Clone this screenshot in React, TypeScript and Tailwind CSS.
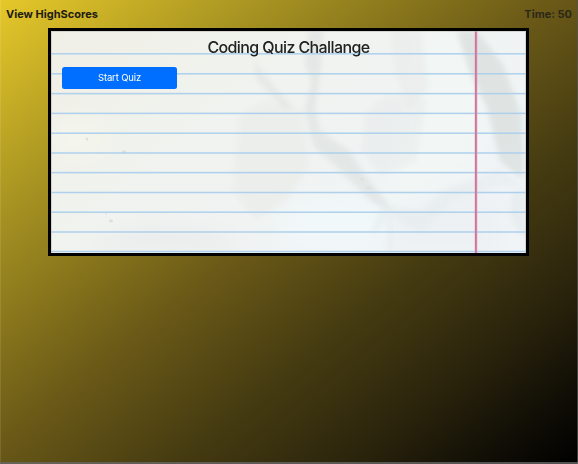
const ruleYs = [22.8, 42.8, 62.6, 82.4, 102.2, 122, 141.6, 161.5, 181.2, 201, 220.5];

/** Creased notebook sheet: soft folds, blue rules and a pink margin. */
function Paper() {
  return (
    <svg className="absolute inset-0 h-full w-full" viewBox="0 0 475 222" preserveAspectRatio="none" aria-hidden="true">
      <defs>
        <linearGradient id="sheet" x1="0" y1="0" x2="1" y2="0.55">
          <stop offset="0" stopColor="#f0efe6" />
          <stop offset="0.45" stopColor="#f0f3ef" />
          <stop offset="1" stopColor="#f0f4f7" />
        </linearGradient>
        <filter id="soft" x="-20%" y="-20%" width="140%" height="140%">
          <feGaussianBlur stdDeviation="2.6" />
        </filter>
        <filter id="wide" x="-40%" y="-40%" width="180%" height="180%">
          <feGaussianBlur stdDeviation="10" />
        </filter>
      </defs>
      <rect width="475" height="222" fill="url(#sheet)" />
      <g filter="url(#wide)">
        <ellipse cx="28" cy="107" rx="28" ry="20" fill="#f4f5ec" />
        <ellipse cx="290" cy="193" rx="62" ry="28" fill="#f1f8f9" />
        <path d="M370 0h48l16 75-15 65-75 35-5-50z" fill="#f2f7f5" />
        <path d="M50 210l42-16 70 5 35 23H30z" fill="#ebeded" />
        <path d="M340 180l75-25 35 15v52H333z" fill="#edf1f4" />
      </g>
      <g filter="url(#soft)">
        <path d="M188 88q22-30 64-8l7 56-24 34-30 19-24-30z" fill="#e6e9e4" opacity=".45" />
        <path d="M315 82q27-31 60-12l-10 60-35 14-19-26z" fill="#e3e7e5" opacity=".4" />
        <path d="M340 0h30l8 58-20 20-14-38z" fill="#e8eae7" opacity=".55" />
        <path d="M203 30l22 28 17 18-8 2-28-29z" fill="#e0e3e0" opacity=".6" />
        <path d="M258 0h14l-2 35-6 42 5 23 29 19 16 25 29 36-21-8-31-31-29-26-8-38 7-26-7-18z" fill="#dfe3e1" opacity=".75" />
        <path d="M406 0h20l26 34 18 48 3 44-2 22-22-18-13-53-18-38z" fill="#dde2e1" opacity=".9" />
        <path d="M330 173l40 9 23-23 31-10 23-11 26 18-24-2-49 16-28 32-33-18-20 23z" fill="#e2e8e9" opacity=".45" />
        <path d="M463 160q-12 30 12 48v-48z" fill="#e4eaeb" opacity=".7" />
        <path d="M339 184v38" stroke="#dee5e8" strokeWidth="3" opacity=".5" />
      </g>
      <g fill="#dbdfdd">
        <ellipse cx="73" cy="121" rx="2" ry="1.4" />
        <ellipse cx="36" cy="108" rx="1.2" ry="1.5" />
        <ellipse cx="60" cy="190" rx="2" ry="1.4" />
        <ellipse cx="55" cy="183" rx="1" ry=".8" />
        <ellipse cx="318" cy="157" rx="3" ry="1.4" opacity=".7" />
        <ellipse cx="311" cy="148" rx="2" ry="1.5" opacity=".7" />
      </g>
      {ruleYs.map((y) => (
        <rect key={y} x="0" y={y - 0.75} width="475" height="1.5" fill="#aed0ed" />
      ))}
      <rect x="423.8" y="0" width="2.4" height="222" fill="#d789a9" />
      <rect x="424.4" y="0" width="0.8" height="222" fill="#c56c94" />
      <path d="M.5 222V.5H474.5V222" fill="none" stroke="#b9bbb4" opacity=".55" />
    </svg>
  );
}

export default function App() {
  return (
    <div className="relative flex h-[464px] w-[578px] flex-col overflow-hidden bg-[linear-gradient(to_bottom_right,#e6c82a_0%,#a99522_22%,#6a5917_48%,#453b11_65%,#2b240c_80%,#0f0d05_92%,#000_100%)] font-['Inter','Liberation_Sans',sans-serif] text-[#212529]">
      <header className="flex h-[28px] shrink-0 items-start justify-between px-[6px] pt-[6px] text-[11px] leading-[16px] font-bold">
        <a className="text-[#1d1b12]">View HighScores</a>
        <span className="text-[#2b2819]">Time: 50</span>
      </header>
      <main className="relative ml-[48px] h-[228px] w-[481px] border-[3px] border-black">
        <Paper />
        <div className="relative flex flex-col items-start pl-[11px]">
          <h1 className="mt-[4px] h-[24px] w-[453px] text-center text-[16px] leading-[24px] font-medium tracking-[-0.6px] text-[#212322]">Coding Quiz Challange</h1>
          <button className="mt-[8px] h-[22px] w-[115px] rounded-[2.5px] bg-[#006fff] text-center text-[9.5px] leading-[22px] tracking-[-0.15px] text-white">Start Quiz</button>
        </div>
      </main>
      <div className="absolute inset-y-0 left-0 w-px bg-white/10" />
      <div className="absolute inset-y-0 right-0 w-px bg-[#555]/70" />
      <div className="absolute inset-x-0 bottom-0 h-[2px] bg-[#666]/80" />
    </div>
  );
}
